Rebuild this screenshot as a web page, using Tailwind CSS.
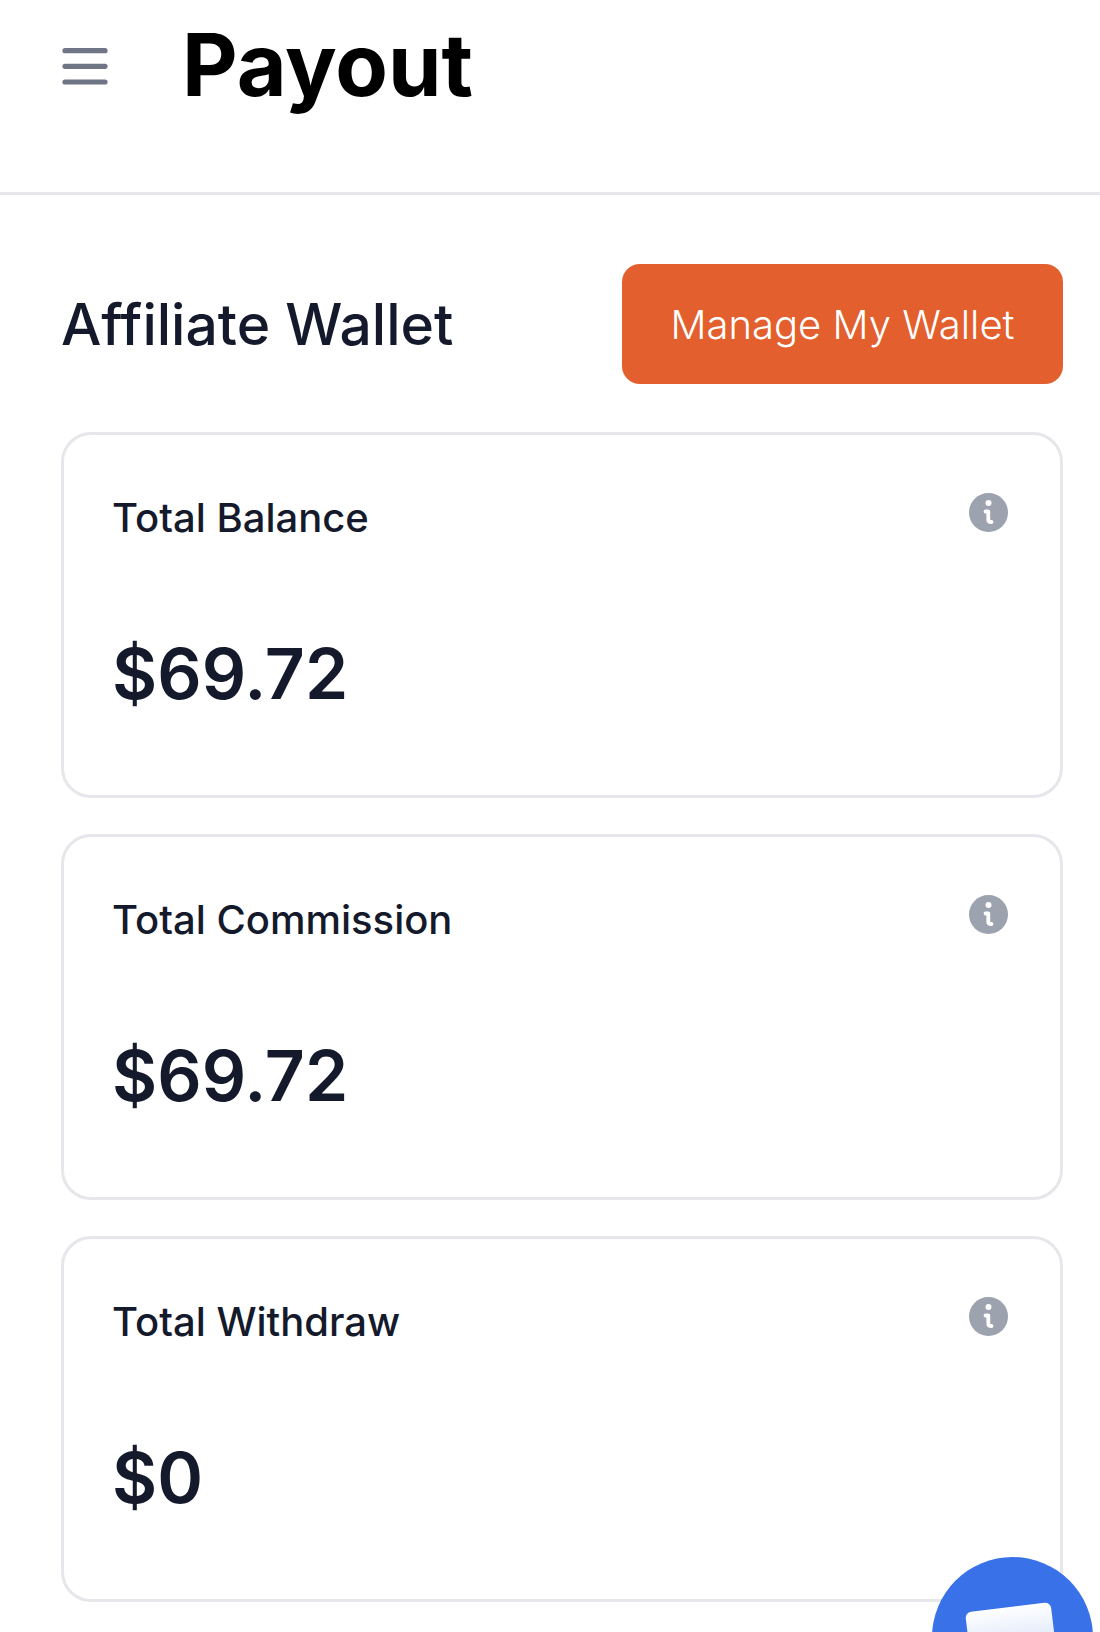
<!DOCTYPE html>
<html lang="en">
<head>
    <meta charset="UTF-8">
    <meta name="viewport" content="width=device-width, initial-scale=1.0">
    <title>Payout</title>
    <script src="https://cdn.jsdelivr.net/npm/@tailwindcss/browser@4"></script>
</head>
<body class="bg-white font-['Inter',sans-serif] text-[#141a2b]">
<div class="relative h-[1632px] overflow-hidden">
    <!-- Header -->
    <header class="h-[195px] border-b-[3px] border-[#e5e7eb] pl-[60px] flex items-start">
        <svg class="w-[48px] h-[48px] mt-[39px] shrink-0" viewBox="0 0 48 48" fill="none" stroke="#6f7585" stroke-width="5.2" stroke-linecap="round">
            <path d="M5 11.7H45M5 27.3H45M5 43H45"/>
        </svg>
        <h1 class="ml-[74px] mt-[12px] text-[86px] leading-[106px] font-bold text-black">Payout</h1>
    </header>

    <main class="pl-[61px] pr-[37px]">
        <!-- Wallet title and button -->
        <div class="flex items-center justify-between mt-[69px]">
            <h2 class="text-[57px] leading-[72px] font-medium translate-y-px">Affiliate Wallet</h2>
            <button class="w-[441px] h-[120px] bg-[#e35f2d] rounded-[18px] text-white text-[40px] font-light pt-[2px]">Manage My Wallet</button>
        </div>

        <!-- Stat cards -->
        <div class="flex flex-col gap-[36px] mt-[48px]">
            <div class="h-[366px] border-[3px] border-[#e5e7eb] rounded-[30px] pl-[48px] pr-[53px] pt-[59px] flex flex-col">
                <div class="flex justify-between items-start">
                    <p class="text-[40px] leading-[48px] font-medium">Total Balance</p>
                    <svg class="w-[39px] h-[39px] translate-x-px -translate-y-px" viewBox="0 0 39 39">
                        <circle cx="19.5" cy="19.5" r="19.5" fill="#9ca3af"/>
                        <circle cx="19.5" cy="10" r="3" fill="#fff"/>
                        <path d="M16.5 18.5H19.3V27C19.3 28.5 20 29 22.5 29" fill="none" stroke="#fff" stroke-width="3.8" stroke-linecap="round" stroke-linejoin="round"/>
                    </svg>
                </div>
                <p class="mt-[90px] text-[69.5px] leading-[84px] font-semibold">$69.72</p>
            </div>
            <div class="h-[366px] border-[3px] border-[#e5e7eb] rounded-[30px] pl-[48px] pr-[53px] pt-[59px] flex flex-col">
                <div class="flex justify-between items-start">
                    <p class="text-[40px] leading-[48px] font-medium">Total Commission</p>
                    <svg class="w-[39px] h-[39px] translate-x-px -translate-y-px" viewBox="0 0 39 39">
                        <circle cx="19.5" cy="19.5" r="19.5" fill="#9ca3af"/>
                        <circle cx="19.5" cy="10" r="3" fill="#fff"/>
                        <path d="M16.5 18.5H19.3V27C19.3 28.5 20 29 22.5 29" fill="none" stroke="#fff" stroke-width="3.8" stroke-linecap="round" stroke-linejoin="round"/>
                    </svg>
                </div>
                <p class="mt-[90px] text-[69.5px] leading-[84px] font-semibold">$69.72</p>
            </div>
            <div class="h-[366px] border-[3px] border-[#e5e7eb] rounded-[30px] pl-[48px] pr-[53px] pt-[59px] flex flex-col">
                <div class="flex justify-between items-start">
                    <p class="text-[40px] leading-[48px] font-medium">Total Withdraw</p>
                    <svg class="w-[39px] h-[39px] translate-x-px -translate-y-px" viewBox="0 0 39 39">
                        <circle cx="19.5" cy="19.5" r="19.5" fill="#9ca3af"/>
                        <circle cx="19.5" cy="10" r="3" fill="#fff"/>
                        <path d="M16.5 18.5H19.3V27C19.3 28.5 20 29 22.5 29" fill="none" stroke="#fff" stroke-width="3.8" stroke-linecap="round" stroke-linejoin="round"/>
                    </svg>
                </div>
                <p class="mt-[90px] text-[69.5px] leading-[84px] font-semibold">$0</p>
            </div>
        </div>
    </main>

    <!-- Floating chat button -->
    <div class="absolute left-[932px] top-[1557px] w-[161px] h-[161px] rounded-full bg-[#3972e8] overflow-hidden">
        <div class="absolute left-[37px] top-[50px] w-[86px] h-[70px] rounded-[6px] -rotate-[7deg] bg-gradient-to-b from-white to-[#c3d4f5]"></div>
    </div>
</div>
</body>
</html>
